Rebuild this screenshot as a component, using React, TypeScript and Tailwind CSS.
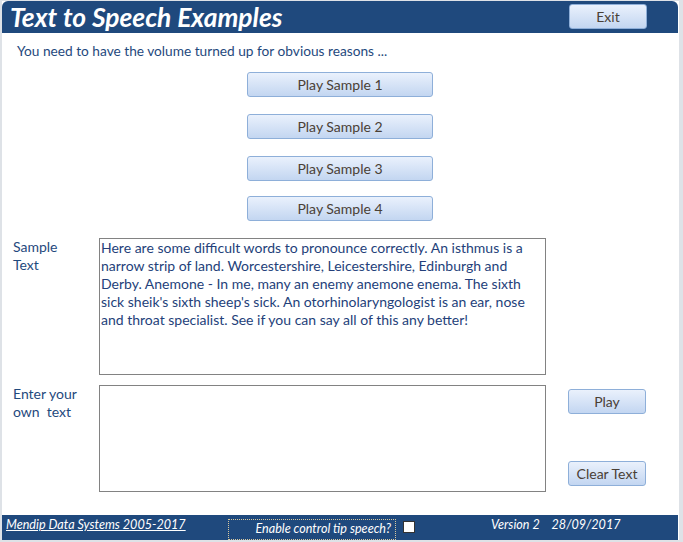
const font = { fontFamily: "Lato, 'Open Sans', sans-serif" };

const sampleLines = [
  "Here are some difficult words to pronounce correctly. An isthmus is a",
  "narrow strip of land. Worcestershire, Leicestershire, Edinburgh and",
  "Derby. Anemone - In me, many an enemy anemone enema. The sixth",
  "sick sheik's sixth sheep's sick. An otorhinolaryngologist is an ear, nose",
  "and throat specialist. See if you can say all of this any better!",
];

function AccessButton({ label, className }: { label: string; className: string }) {
  return (
    <button
      className={`flex items-center justify-center rounded-[3px] border border-[#8eafd9] bg-gradient-to-b from-[#eaf1fc] to-[#c3d6f1] text-[14px] text-[#4a4035] ${className}`}
    >
      {label}
    </button>
  );
}

export default function App() {
  return (
    <div className="h-[542px] w-[683px] bg-[#dee2e7] pt-[1px] pl-[2px]" style={font}>
      <div className="flex h-[539px] w-[677px] flex-col bg-white">
        {/* Header */}
        <div className="mr-[1px] flex h-[32px] items-center rounded-t-[6px] bg-[#1f497d]">
          <span className="ml-[8px] text-[26.4px] font-bold italic leading-none text-white">
            Text to Speech Examples
          </span>
          <AccessButton label="Exit" className="ml-auto mr-[31px] mt-[3px] h-[25px] w-[78px] self-start" />
        </div>

        {/* Intro */}
        <div className="mt-[9px] h-[18px] pl-[15px] text-[13.7px] leading-[18px] text-[#1f497d]">
          You need to have the volume turned up for obvious reasons ...
        </div>

        {/* Sample buttons */}
        <div className="ml-[245px] flex flex-col">
          <AccessButton label="Play Sample 1" className="mt-[12px] h-[25px] w-[186px]" />
          <AccessButton label="Play Sample 2" className="mt-[17px] h-[25px] w-[186px]" />
          <AccessButton label="Play Sample 3" className="mt-[17px] h-[25px] w-[186px]" />
          <AccessButton label="Play Sample 4" className="mt-[15px] h-[25px] w-[186px]" />
        </div>

        {/* Sample text */}
        <div className="mt-[17px] flex">
          <div className="w-[97px] pl-[11px] text-[14px] leading-[18px] text-[#1f497d]">
            Sample
            <br />
            Text
          </div>
          <div className="h-[137px] w-[447px] border border-[#828282] pl-[1px] text-[14px] leading-[18px] text-[#243f7a]">
            {sampleLines.map((line) => (
              <div key={line} className="whitespace-nowrap">
                {line}
              </div>
            ))}
          </div>
        </div>

        {/* Own text */}
        <div className="mt-[10px] flex">
          <div className="w-[97px] pl-[11px] text-[14px] leading-[18px] text-[#1f497d]">
            Enter your
            <br />
            <span className="whitespace-pre">own  text</span>
          </div>
          <div className="h-[107px] w-[447px] border border-[#828282]" />
          <div className="ml-[22px] flex flex-col">
            <AccessButton label="Play" className="mt-[4px] h-[25px] w-[78px]" />
            <AccessButton label="Clear Text" className="mt-[47px] h-[25px] w-[78px]" />
          </div>
        </div>

        {/* Footer */}
        <div className="mr-[1px] mt-auto flex h-[25px] items-end bg-[#1f497d] text-[12.6px] italic text-white">
          <span className="mb-[5px] ml-[4px] w-[222px] underline">Mendip Data Systems 2005-2017</span>
          <div className="flex h-[21px] w-[168px] items-center justify-end border border-dotted border-[#d9c9a0] pr-[4px]">
            Enable control tip speech?
          </div>
          <div className="mb-[7px] ml-[7px] h-[12px] w-[12px] border border-[#333] bg-white" />
          <span className="mb-[5px] ml-[76px] whitespace-pre">Version 2    28/09/2017</span>
        </div>
      </div>
    </div>
  );
}
